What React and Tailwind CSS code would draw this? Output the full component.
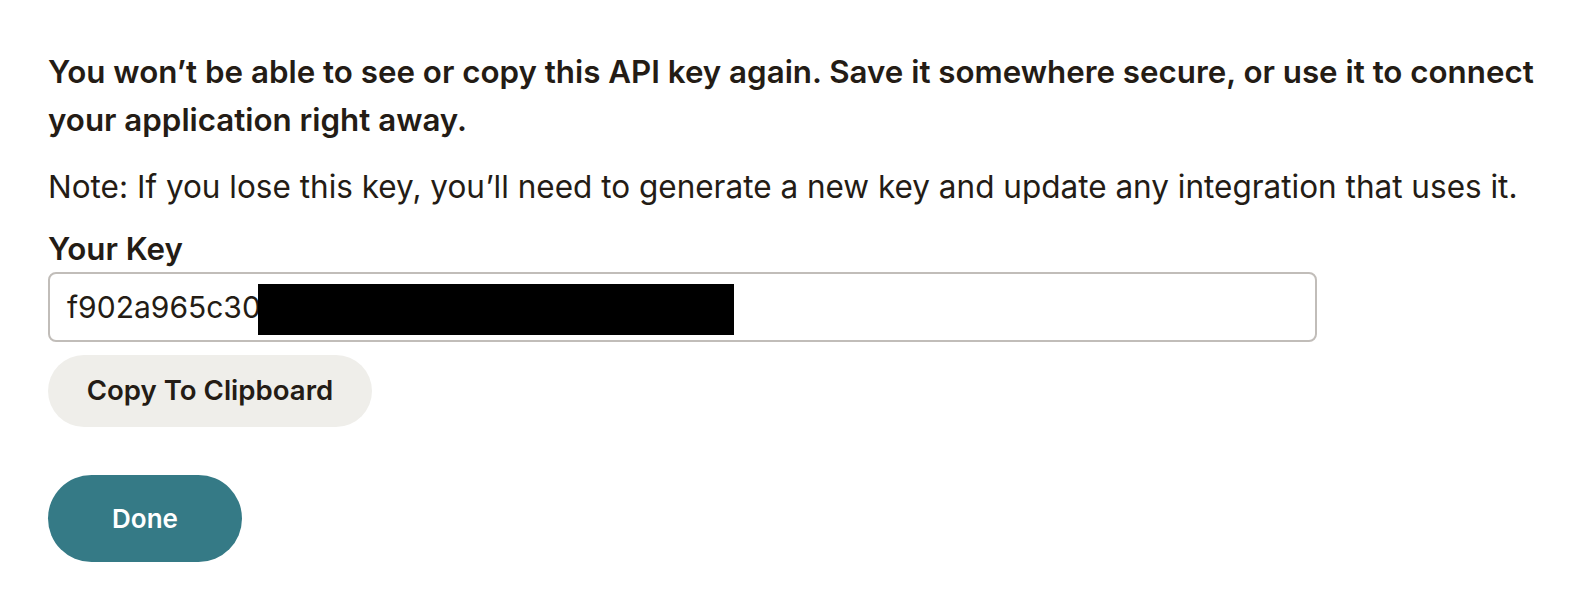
export default function App() {
  return (
    <div
      className="min-h-[596px] bg-white pl-[48px] pr-6 pt-[48px] text-[#241c15]"
      style={{ fontFamily: 'Inter, "Liberation Sans", Arial, sans-serif' }}
    >
      <p className="text-[31.3px] font-semibold leading-[48px]">
        You won’t be able to see or copy this API key again. Save it somewhere secure, or use it to connect
        your application right away.
      </p>
      <p className="mt-[21px] text-[31.5px] leading-[44px]">
        Note: If you lose this key, you’ll need to generate a new key and update any integration that uses it.
      </p>
      <label className="mt-[18px] block text-[31.3px] font-semibold leading-[44px]">Your Key</label>
      <div className="relative mt-px flex h-[70px] w-[1269px] items-center rounded-lg border-2 border-[#c1bdb9] pl-[17px] text-[30px]">
        <span>f902a965c30</span>
        <span className="absolute left-[208px] top-[10px] h-[51px] w-[476px] bg-black" />
      </div>
      <button className="mt-[13px] flex h-[72px] w-[324px] items-center justify-center rounded-full bg-[#efeeea] text-[27.6px] font-semibold">
        Copy To Clipboard
      </button>
      <button className="mt-12 flex h-[87px] w-[194px] items-center justify-center rounded-full bg-[#357a86] text-[26px] font-semibold text-white">
        Done
      </button>
    </div>
  )
}
